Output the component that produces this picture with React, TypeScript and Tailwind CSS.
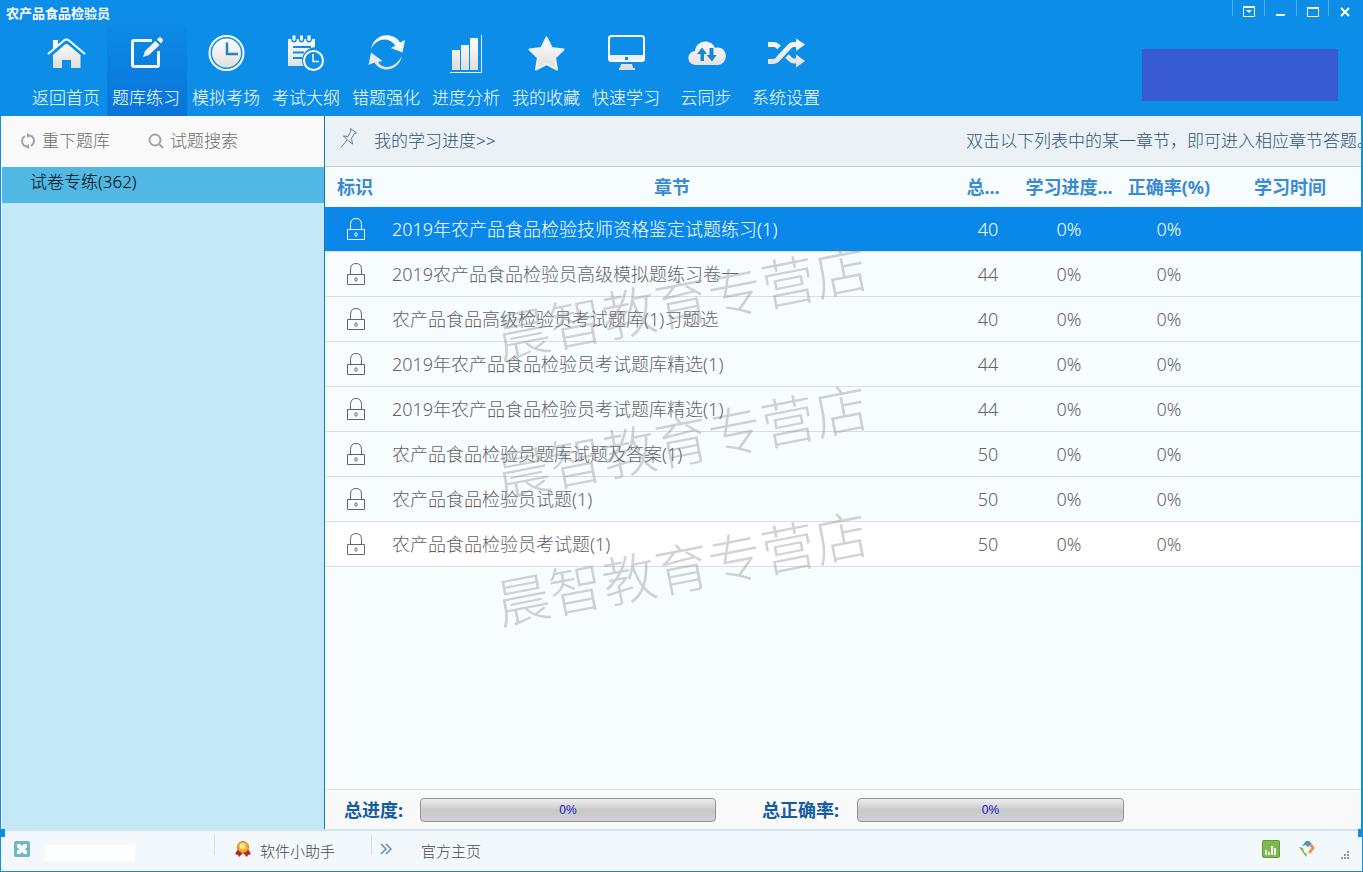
import { useState, type ReactNode } from "react";

const FILL = "url(#metal)";
const BLUE = "#0c8ee8";

const navItems: { label: string; icon: ReactNode }[] = [
  {
    label: "返回首页",
    icon: (
      <>
        <path d="M6 7h5v5l-5 4z" fill={FILL} />
        <path d="M1 21 17 7.500q2.500-2 5 0L38 21" fill="none" stroke="#fff" strokeWidth="2" />
        <path d="M6 22 18 11.500q1.500-1 3 0L33.500 22v13H24v-8h-9v8H6z" fill={FILL} />
      </>
    ),
  },
  {
    label: "题库练习",
    icon: (
      <>
        <path d="M25 7.500H7Q5.500 7.500 5.500 9v23q0 1.500 1.500 1.500h23q1.500 0 1.500-1.500V18" fill="none" stroke="#f4f6fa" strokeWidth="3" />
        <path d="m16 24 2-6L28.500 8l4 4L22 22zM30 6.500l2-2q1-.8 2 0l1.500 1.700q1 1 0 2L34 10.500z" fill={FILL} />
      </>
    ),
  },
  {
    label: "模拟考场",
    icon: (
      <>
        <circle cx="19.500" cy="20" r="17" fill="none" stroke="#fff" strokeWidth="2" />
        <circle cx="19.500" cy="20" r="14.500" fill={FILL} />
        <path d="M20 9.500V21h11" fill="none" stroke="#2583bd" strokeWidth="2.500" />
      </>
    ),
  },
  {
    label: "考试大纲",
    icon: (
      <>
        <path d="M1 6h27v8q-9 1-12 9l1 10H1z" fill={FILL} />
        <path d="M6 14h18M6 19.500h11M6 25h9" stroke={BLUE} strokeWidth="2" />
        {[7, 14.5, 22].map((x) => (
          <g key={x}>
            <ellipse cx={x} cy="5" rx="3" ry="4.500" fill={BLUE} />
            <path d={`M${x - 1.5} 2.500v4q1.500 3 3 0v-4z`} fill="#fff" />
          </g>
        ))}
        <circle cx="26.500" cy="27.500" r="11.500" fill={BLUE} />
        <circle cx="26.500" cy="27.500" r="9.500" fill="none" stroke="#fff" strokeWidth="2" />
        <path d="M26 21v7.500h6" fill="none" stroke="#fff" strokeWidth="1.500" />
      </>
    ),
  },
  {
    label: "错题强化",
    icon: (
      <>
        <path d="M4 16C7 0 26-2 33 9.500l5-2.500-2.500 12.500L24 15l4.500-2.500C22 3 9 5 4 16z" fill={FILL} />
        <path d="M35 23C32 38 14 41 7.500 29.500L1.500 32 4 19.500 15.500 28l-4.500 1c6 9 18 5 24-6z" fill={FILL} />
      </>
    ),
  },
  {
    label: "进度分析",
    icon: (
      <>
        <path d="M5 17h8v20H5zM14 12h8v25h-8zM23 5h8v32h-8z" fill={FILL} />
        <path d="M34.500 2v37M3 39.500h32" stroke="#e8f2fb" strokeWidth="1" fill="none" />
      </>
    ),
  },
  {
    label: "我的收藏",
    icon: (
      <path
        d="M19.500 4.500 24.700 15l11.800 1.500-8.500 8.200L30 36.500 19.500 31 9 36.500l2-11.800L2.500 16.500 14.300 15z"
        fill={FILL}
        stroke="#eef1f4"
        strokeWidth="2"
        strokeLinejoin="round"
      />
    ),
  },
  {
    label: "快速学习",
    icon: (
      <>
        <rect x="2" y="22" width="35" height="6" fill="#eceef0" />
        <rect x="2" y="3" width="35" height="25" rx="2.500" fill="none" stroke="#fff" strokeWidth="2" />
        <rect x="18" y="24" width="3" height="3" fill={BLUE} />
        <path d="M14 31h11l1 4h2v2H12v-2h1z" fill={FILL} />
      </>
    ),
  },
  {
    label: "云同步",
    icon: (
      <>
        <path d="M9 32C-1 32-1 19 8 18 9 7 24 5 28 15c7-2 13 4 10 12-2 4-5 5-9 5z" fill={FILL} />
        <path d="M13.500 28v-7H10l5-6.500L20 21h-3v7zM22.500 15h4v7h3L25 28.500 19.500 22h3z" fill="#1a86d0" />
      </>
    ),
  },
  {
    label: "系统设置",
    icon: (
      <g fill="none" stroke={FILL} strokeWidth="5">
        <path d="M1 11.500h6q2 0 4 2l1 1M20 23l3 3q2 2 4 2h3M1 28.500h5q3 0 5-2.500L22 14q2-2.500 5-2.500h3" />
        <path d="m29 5.500 9 6-9 6.500zM29 21.500l9 6.500-9 6.500z" fill={FILL} stroke="none" />
      </g>
    ),
  },
];

const chapters = [
  { name: "2019年农产品食品检验技师资格鉴定试题练习(1)", total: 40 },
  { name: "2019农产品食品检验员高级模拟题练习卷一", total: 44 },
  { name: "农产品食品高级检验员考试题库(1)习题选", total: 40 },
  { name: "2019年农产品食品检验员考试题库精选(1)", total: 44 },
  { name: "2019年农产品食品检验员考试题库精选(1)", total: 44 },
  { name: "农产品食品检验员题库试题及答案(1)", total: 50 },
  { name: "农产品食品检验员试题(1)", total: 50 },
  { name: "农产品食品检验员考试题(1)", total: 50 },
];

function LockIcon() {
  return (
    <svg width="18" height="24" viewBox="0 0 18 24" fill="none" stroke="currentColor" className="mx-auto">
      <path d="M.500 12.500h17v10H.500zM3.500 12V7.500q0-6 5.500-6t5.500 6V12" />
      <ellipse cx="9" cy="17.500" rx="1.200" ry="1.700" />
    </svg>
  );
}

function WindowControls() {
  return (
    <div className="flex h-4 text-white">
      <button aria-label="菜单" className="flex w-8 justify-center border-l border-[#4fb0f2] pt-1.5">
        <svg width="12" height="12" viewBox="0 0 12 12" fill="none" stroke="currentColor">
          <path d="M.500 1.500h11v9H.500zM0 .500h12" />
          <path d="M3 4h6L6 7z" fill="currentColor" stroke="none" />
        </svg>
      </button>
      <button aria-label="最小化" className="flex w-8 justify-center border-l border-[#4fb0f2] pt-1.5">
        <svg width="10" height="12" viewBox="0 0 10 12">
          <path d="M0 8h9v2H0z" fill="currentColor" />
        </svg>
      </button>
      <button aria-label="最大化" className="flex w-8 justify-center border-l border-[#4fb0f2] pt-1.5">
        <svg width="12" height="12" viewBox="0 0 12 12" fill="none" stroke="currentColor">
          <path d="M.500 2.500h11v8H.500zM0 1.500h12" />
        </svg>
      </button>
      <button aria-label="关闭" className="flex w-8 justify-center border-l border-[#4fb0f2] pt-1.5">
        <svg width="10" height="12" viewBox="0 0 10 12" fill="none" stroke="currentColor" strokeWidth="2">
          <path d="m1 2 8 8M9 2l-8 8" />
        </svg>
      </button>
    </div>
  );
}

function Meter({ label, className }: { label: string; className: string }) {
  return (
    <div
      role="progressbar"
      aria-label={label}
      aria-valuenow={0}
      className={`${className} flex h-6 items-center justify-center rounded-sm border border-[#929292] bg-linear-to-b from-[#eeeeee] via-[#c9c9c9] to-[#d0d0d0] font-['Liberation_Sans',sans-serif] text-xs font-normal text-[#1414c8]`}
    >
      0%
    </div>
  );
}

function Watermark({ className }: { className: string }) {
  return (
    <div
      aria-hidden="true"
      className={`${className} pointer-events-none absolute left-[168px] -rotate-11 text-[54px] leading-[54px] font-light whitespace-nowrap text-[#808080]/35 select-none`}
    >
      晨智教育专营店
    </div>
  );
}

export default function App() {
  const [activeNav, setActiveNav] = useState(1);
  const [selected, setSelected] = useState(0);

  return (
    <div className="relative flex min-h-screen flex-col border-b border-[#2b8ca8] bg-[#f3f8fc] font-['Noto_Sans','Noto_Sans_CJK_SC',sans-serif]">
      <svg width="0" height="0" className="absolute">
        <defs>
          <linearGradient id="metal" gradientUnits="userSpaceOnUse" x1="0" y1="4" x2="0" y2="38">
            <stop offset="0" stopColor="#ffffff" />
            <stop offset="1" stopColor="#dcdcdc" />
          </linearGradient>
        </defs>
      </svg>

      <header className="bg-[#0c8ee8] text-white">
        <div className="flex h-[26px] items-start justify-between pr-[3px] pl-1.5">
          <h1 className="pt-1 text-[13px] leading-[18px] font-bold">农产品食品检验员</h1>
          <WindowControls />
        </div>
        <div className="flex items-start justify-between pr-[25px] pl-[27px]">
          <nav className="flex">
            {navItems.map((item, i) => (
              <button
                key={item.label}
                onClick={() => setActiveNav(i)}
                className={`flex h-[90px] w-20 flex-col items-center gap-3 pt-[7px] pr-0.5 text-[17px] leading-6 font-light whitespace-nowrap ${
                  activeNav === i ? "bg-linear-to-b from-[#0c8ae6] to-[#0a74d8]" : ""
                }`}
              >
                <svg width="40" height="41" viewBox="0 0 40 41" className="ml-0.5">{item.icon}</svg>
                {item.label}
              </button>
            ))}
          </nav>
          <div className="mt-[23px] h-[52px] w-[196px] bg-[#385ad2]" />
        </div>
      </header>

      <div className="flex flex-1 border-r-2 border-l border-[#118de0]">
        <aside className="flex w-[324px] shrink-0 flex-col border-r border-l border-r-[#1878bc] border-l-white bg-[#c3e9f8]">
          <div className="flex h-[51px] items-center gap-[38px] bg-[#f9f9f9] pb-0.5 pl-[18px] text-[17px] font-light text-[#6c6c6c]">
            <button className="flex items-center gap-1.5">
              <svg width="16" height="16" viewBox="0 0 16 16" fill="none" stroke="#a2a6aa" strokeWidth="2">
                <path d="M9 13.500Q2 14 2 8q0-3 3-5M7 2.500Q14 2 14 8q0 3-3 5" />
                <path d="m7 0 4 2.500L7 5zM9 16l-4-2.500L9 11z" fill="#a2a6aa" stroke="none" />
              </svg>
              重下题库
            </button>
            <button className="flex items-center gap-1.5">
              <svg width="16" height="16" viewBox="0 0 16 16" fill="none" stroke="#a2a6aa" strokeWidth="2">
                <circle cx="7" cy="7" r="5.500" />
                <path d="m11 11 4 4" />
              </svg>
              试题搜索
            </button>
          </div>
          <button className="h-9 bg-[#50b8e2] pb-1.5 pl-7 text-left text-[17px] leading-6 font-light text-black">
            试卷专练(362)
          </button>
        </aside>

        <main className="relative flex min-w-0 flex-1 flex-col overflow-hidden bg-[#f7fcff]">
          <div className="flex h-[51px] items-center justify-between border-b border-[#bfd2de] bg-[#ebf1f5] text-[17px] font-light whitespace-nowrap text-[#30547a]">
            <a href="#progress" className="flex items-center gap-4 pl-3.5">
              <svg width="19" height="22" viewBox="0 0 19 22" fill="none" stroke="#6a7f92" strokeLinejoin="round" className="mb-1.5">
                <path d="m11.500 1.500 6 4.500-2 .5-3 5 1 5.500L9 13.500 4.500 9l4.500.5L12 4zM8 13l-6 7.500" />
              </svg>
              <span>我的学习进度&gt;&gt;</span>
            </a>
            <p className="w-[395px] shrink-0 overflow-hidden">双击以下列表中的某一章节，即可进入相应章节答题。</p>
          </div>

          <table className="w-full table-fixed border-collapse text-[18px] leading-6">
            <colgroup>
              <col className="w-[62px]" />
              <col />
              <col className="w-[62px]" />
              <col className="w-[100px]" />
              <col className="w-[100px]" />
              <col className="w-[142px]" />
            </colgroup>
            <thead>
              <tr className="h-10 whitespace-nowrap text-[#3a8ad2]">
                <th className="pr-0.5">标识</th>
                <th>章节</th>
                <th className="pr-2.5">总...</th>
                <th>学习进度...</th>
                <th>正确率(%)</th>
                <th>学习时间</th>
              </tr>
            </thead>
            <tbody className="font-light">
              {chapters.map((c, i) => (
                <tr
                  key={i}
                  onClick={() => setSelected(i)}
                  className={`h-[45px] border-b border-[#d8dfe3] text-center first:h-11 ${
                    selected === i
                      ? "bg-[#0a88ea] text-white"
                      : i === chapters.length - 1
                        ? "bg-white text-[#646464]"
                        : "text-[#646464]"
                  }`}
                >
                  <td>
                    <LockIcon />
                  </td>
                  <td className="truncate pl-[5px] text-left">{c.name}</td>
                  <td>{c.total}</td>
                  <td>0%</td>
                  <td>0%</td>
                  <td></td>
                </tr>
              ))}
            </tbody>
          </table>

          <div className="mt-auto flex h-10 items-center border-t border-[#dbe6ec] bg-[#f9f9f9] pl-[19px] text-[18px] leading-6 font-bold text-[#145ca6]">
            <span className="w-[76px]">总进度:</span>
            <Meter label="总进度" className="w-[296px]" />
            <span className="ml-[46px] w-[95px]">总正确率:</span>
            <Meter label="总正确率" className="w-[267px]" />
          </div>

          <Watermark className="top-[159px]" />
          <Watermark className="top-[298px]" />
          <Watermark className="top-[425px]" />
        </main>
      </div>

      <footer className="relative flex h-[42px] items-center border-x border-t-2 border-x-[#118de0] border-t-[#d2e4ec] pr-3 text-[15px] leading-5 font-light text-[#484848]">
        <span className="absolute -top-0.5 -left-px h-2 w-[5px] bg-[#118de0]" />
        <span className="absolute -top-0.5 -right-px h-2 w-[5px] bg-[#118de0]" />
        <div className="flex h-full w-[213px] items-center gap-3.5 pl-3">
          <svg width="18" height="18" viewBox="0 0 18 18" className="mb-1">
            <rect x="1" y="1" width="16" height="16" rx="2" fill="#6fb6c8" />
            <path d="M4 4h3l2 2 2-2h3v3l-2 2 2 2v3h-3l-2-2-2 2H4v-3l2-2-2-2z" fill="#fff" />
          </svg>
          <span className="mt-1 h-4 w-[90px] bg-white" />
        </div>
        <span className="mb-3 h-5 w-px bg-[#d5dfe5]" />
        <a href="#helper" className="flex w-[156px] items-center gap-2 pl-[19px]">
          <svg width="18" height="18" viewBox="0 0 18 18" className="mb-1">
            <path d="m4 9-3 5 3 1 1 2 4-4 4 4 1-2 3-1-3-5z" fill="#b22a22" />
            <circle cx="9" cy="7" r="5.500" fill="#f3ae32" stroke="#d38122" />
            <circle cx="8.500" cy="6" r="3" fill="#ffe58a" />
          </svg>
          软件小助手
        </a>
        <span className="mb-3 h-5 w-px bg-[#d5dfe5]" />
        <div className="w-[49px] pb-1 pl-2">
          <svg width="12" height="12" viewBox="0 0 12 12" fill="none" stroke="#5f90b8" strokeWidth="1.500">
            <path d="m1 1 5 5-5 5M6 1l5 5-5 5" />
          </svg>
        </div>
        <a href="#home">官方主页</a>
        <div className="ml-auto flex items-center pb-1">
          <svg width="18" height="18" viewBox="0 0 18 18" className="mr-[18px]">
            <rect x=".500" y=".500" width="17" height="17" rx="1" fill="#7cba4c" stroke="#5c9c38" />
            <path d="M3 10h2v5H3zM6 12h2v3H6zM9 6h2v9H9zM12 8h2v7h-2z" fill="#fff" />
          </svg>
          <svg width="18" height="18" viewBox="0 0 18 18" className="mr-6">
            <path d="m4 6 4-5h3l3 3-4 3-2-2z" fill="#4597c5" />
            <path d="m11 5 3-1 3 4-5 6-2-2 3-4z" fill="#ee9350" />
            <path d="m1 7 4 1 1 4 3 2-1 3z" fill="#83b944" />
          </svg>
          <svg width="10" height="10" viewBox="0 0 10 10" fill="#8a98a4" className="mt-3">
            <path d="M7 1h2v2H7zM4 4h2v2H4zM7 4h2v2H7zM1 7h2v2H1zM4 7h2v2H4zM7 7h2v2H7z" />
          </svg>
        </div>
      </footer>
    </div>
  );
}
